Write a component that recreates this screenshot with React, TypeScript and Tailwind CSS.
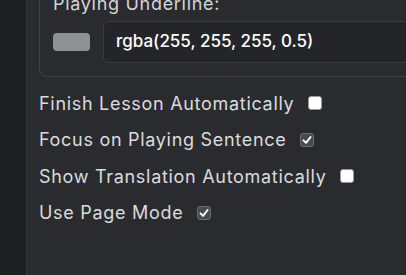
import { useState } from "react";

const font = { fontFamily: '"Inter", "Noto Sans", sans-serif' };

function Box({ checked, onClick }: { checked: boolean; onClick: () => void }) {
  return (
    <button
      onClick={onClick}
      className={
        checked
          ? "flex h-[14px] w-[14px] items-center justify-center rounded-[3px] border border-[#6a6b6e] bg-[#4a4b4e]"
          : "h-[14px] w-[14px] rounded-[3px] border border-[#9a9a9a] bg-white"
      }
    >
      {checked && (
        <svg width="10" height="10" viewBox="0 0 10 10" fill="none">
          <path d="M1.5 5.3 L4 7.8 L8.6 2" stroke="white" strokeWidth="1.9" strokeLinecap="round" strokeLinejoin="round" />
        </svg>
      )}
    </button>
  );
}

export default function App() {
  const [opts, setOpts] = useState([
    { label: "Finish Lesson Automatically", on: false },
    { label: "Focus on Playing Sentence", on: true },
    { label: "Show Translation Automatically", on: false },
    { label: "Use Page Mode", on: true },
  ]);
  return (
    <div className="flex h-[275px] w-[406px] overflow-hidden bg-[#2a2b2e]" style={font}>
      <div className="w-[27px] shrink-0 border-r border-[#333437] bg-[#1e1f21]" />
      <div className="flex-1 pl-[12px]">
        <div className="mt-[-22px] w-[400px] rounded-lg border border-[#414246] px-[13px] pb-[13px] pt-[11px]">
          <div className="text-[18px] leading-[28px] tracking-[0.7px] text-[#d4d4d6]">Playing Underline:</div>
          <div className="mt-[3px] flex items-center gap-[13px]">
            <div className="h-[18px] w-[37px] rounded-[4px] bg-[#8f9092]" />
            <div className="flex h-[42px] flex-1 items-center rounded-md border border-[#3a3b3f] bg-[#242528] px-[12px] text-[17px] font-medium text-white">
              rgba(255, 255, 255, 0.5)
            </div>
          </div>
        </div>
        <div className="mt-[8px] flex flex-col">
          {opts.map((o, i) => (
            <div key={o.label} className="flex h-[36.5px] items-center gap-[14px] text-[18px] tracking-[0.7px] text-[#dcdcde]">
              <span>{o.label}</span>
              <Box
                checked={o.on}
                onClick={() => setOpts(opts.map((p, j) => (j === i ? { ...p, on: !p.on } : p)))}
              />
            </div>
          ))}
        </div>
      </div>
    </div>
  );
}
